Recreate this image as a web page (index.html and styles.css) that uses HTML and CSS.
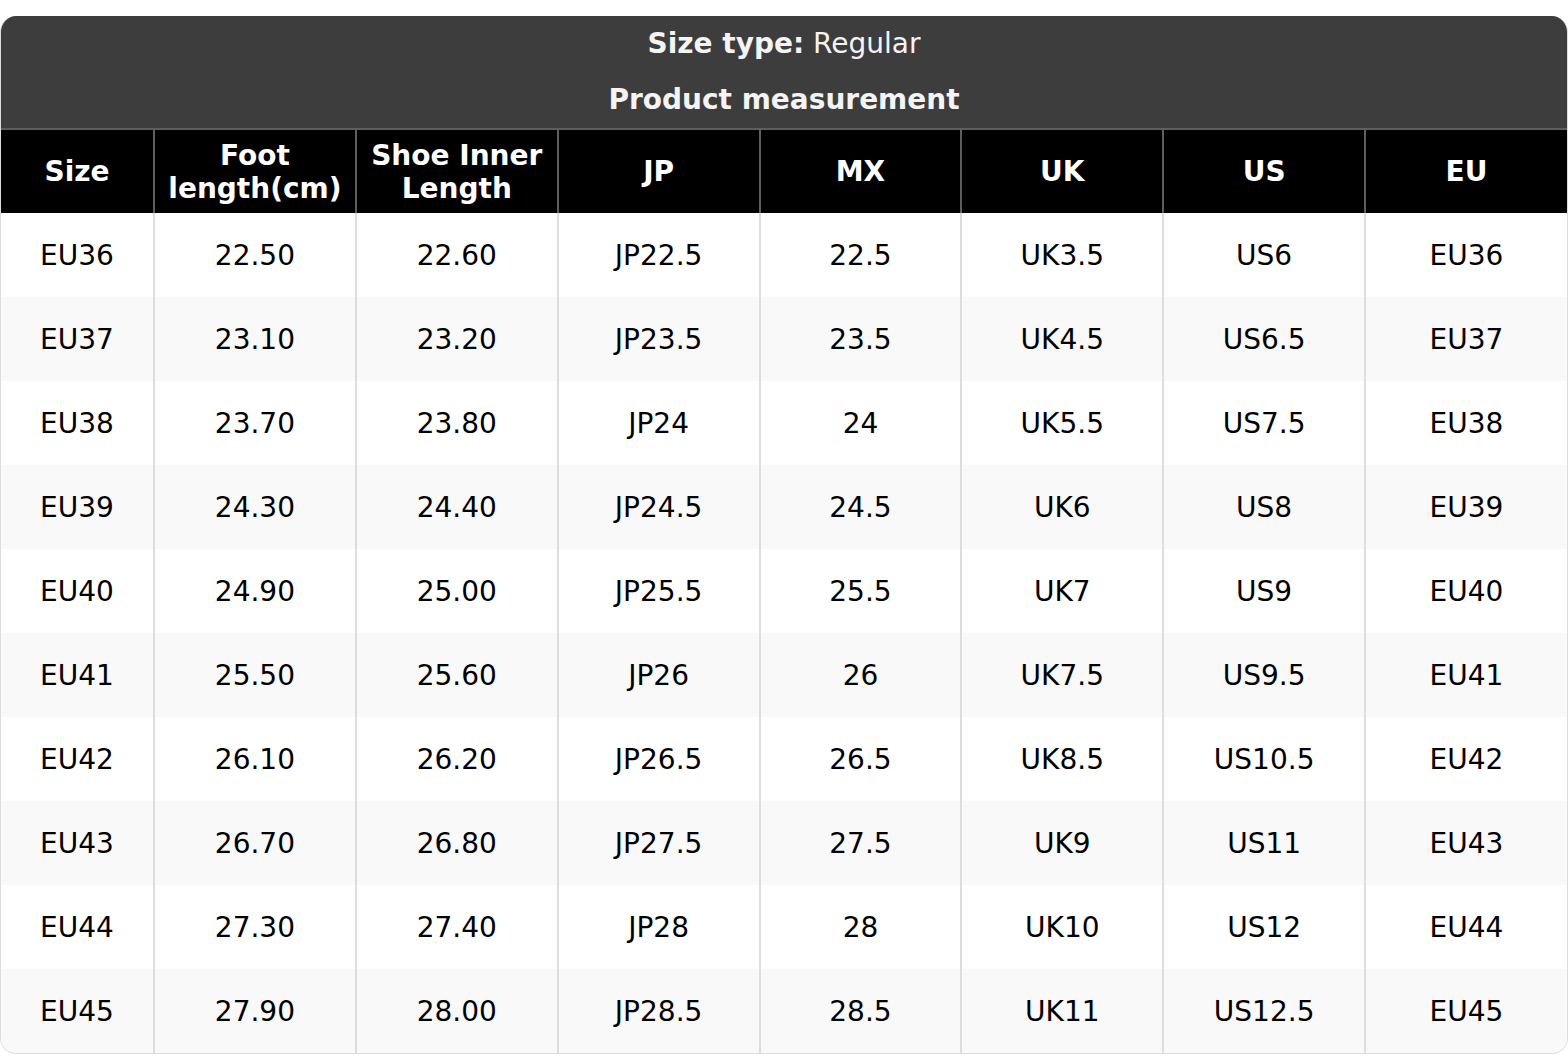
FILE: index.html
```html
<!DOCTYPE html>
<html>
<head>
<meta charset="utf-8">
<link rel="stylesheet" href="styles.css">
</head>
<body>
<div class="chart">
  <div class="title">
    <div class="title-line"><b>Size type:</b> Regular</div>
    <div class="title-line"><b>Product measurement</b></div>
  </div>
  <table class="sizes">
    <colgroup>
      <col class="c-first"><col><col><col><col><col><col><col>
    </colgroup>
    <thead>
      <tr>
        <th>Size</th>
        <th>Foot<br>length(cm)</th>
        <th>Shoe Inner<br>Length</th>
        <th>JP</th>
        <th>MX</th>
        <th>UK</th>
        <th>US</th>
        <th>EU</th>
      </tr>
    </thead>
    <tbody>
      <tr><td>EU36</td><td>22.50</td><td>22.60</td><td>JP22.5</td><td>22.5</td><td>UK3.5</td><td>US6</td><td>EU36</td></tr>
      <tr><td>EU37</td><td>23.10</td><td>23.20</td><td>JP23.5</td><td>23.5</td><td>UK4.5</td><td>US6.5</td><td>EU37</td></tr>
      <tr><td>EU38</td><td>23.70</td><td>23.80</td><td>JP24</td><td>24</td><td>UK5.5</td><td>US7.5</td><td>EU38</td></tr>
      <tr><td>EU39</td><td>24.30</td><td>24.40</td><td>JP24.5</td><td>24.5</td><td>UK6</td><td>US8</td><td>EU39</td></tr>
      <tr><td>EU40</td><td>24.90</td><td>25.00</td><td>JP25.5</td><td>25.5</td><td>UK7</td><td>US9</td><td>EU40</td></tr>
      <tr><td>EU41</td><td>25.50</td><td>25.60</td><td>JP26</td><td>26</td><td>UK7.5</td><td>US9.5</td><td>EU41</td></tr>
      <tr><td>EU42</td><td>26.10</td><td>26.20</td><td>JP26.5</td><td>26.5</td><td>UK8.5</td><td>US10.5</td><td>EU42</td></tr>
      <tr><td>EU43</td><td>26.70</td><td>26.80</td><td>JP27.5</td><td>27.5</td><td>UK9</td><td>US11</td><td>EU43</td></tr>
      <tr><td>EU44</td><td>27.30</td><td>27.40</td><td>JP28</td><td>28</td><td>UK10</td><td>US12</td><td>EU44</td></tr>
      <tr><td>EU45</td><td>27.90</td><td>28.00</td><td>JP28.5</td><td>28.5</td><td>UK11</td><td>US12.5</td><td>EU45</td></tr>
    </tbody>
  </table>
</div>
</body>
</html>
```
FILE: styles.css
```css
html, body {
  margin: 0;
  padding: 0;
  background: #fff;
}
body {
  padding-top: 16px;
  font-family: "DejaVu Sans", sans-serif;
  font-size: 28px;
  color: #000;
}
.chart {
  width: 1568px;
  box-sizing: border-box;
  border: 1px solid #dcdcdc;
  border-top: none;
  border-radius: 16px;
  overflow: hidden;
}
.title {
  background: #3d3d3d;
  color: #f4f4f4;
  text-align: center;
}
.title-line {
  height: 56px;
  line-height: 56px;
}
.title b {
  font-weight: bold;
}
.sizes {
  width: 100%;
  border-collapse: collapse;
  table-layout: fixed;
}
.c-first {
  width: 153px;
}
.sizes th {
  background: #000;
  color: #fff;
  font-weight: bold;
  line-height: 33px;
  height: 83px;
  padding: 0;
  border: 2px solid #5e5e5e;
  border-bottom: none;
  text-align: center;
}
.sizes th:first-child, .sizes td:first-child {
  border-left: none;
}
.sizes th:last-child, .sizes td:last-child {
  border-right: none;
}
.sizes td {
  height: 84px;
  padding: 0;
  text-align: center;
  border-left: 2px solid #dddddd;
  border-right: 2px solid #dddddd;
  background: #fff;
}
.sizes tbody tr:nth-child(even) td {
  background: #f9f9f9;
}
```
